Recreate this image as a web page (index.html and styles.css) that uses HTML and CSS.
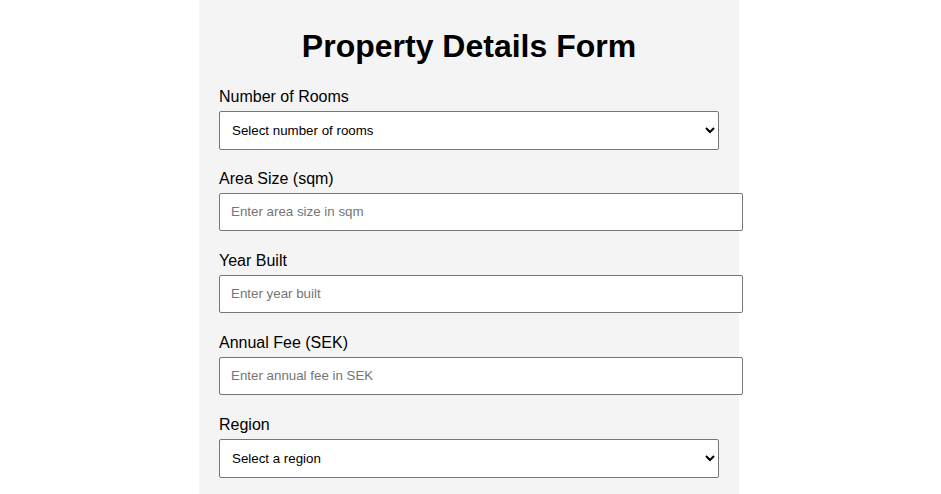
FILE: index.html
```html
<!DOCTYPE html>
<html>
<head>
<title>Property Details Form</title>
<link rel="stylesheet" href="styles.css">
</head>
<body>
<div class="container">
  <h1>Property Details Form</h1>
  <form class="property-form">
    <div class="form-group">
      <label for="rooms">Number of Rooms</label>
      <select id="rooms" name="rooms">
        <option value="">Select number of rooms</option>
        <option value="1">1</option>
        <option value="2">2</option>
        <option value="3">3</option>
        <option value="4">4</option>
        <option value="5">5+</option>
      </select>
    </div>
    <div class="form-group">
      <label for="area">Area Size (sqm)</label>
      <input type="number" id="area" name="area" placeholder="Enter area size in sqm">
    </div>
    <div class="form-group">
      <label for="year">Year Built</label>
      <input type="number" id="year" name="year" placeholder="Enter year built">
    </div>
    <div class="form-group">
      <label for="fee">Annual Fee (SEK)</label>
      <input type="number" id="fee" name="fee" placeholder="Enter annual fee in SEK">
    </div>
    <div class="form-group">
      <label for="region">Region</label>
      <select id="region" name="region">
        <option value="">Select a region</option>
        <option value="stockholm">Stockholm</option>
        <option value="gothenburg">Gothenburg</option>
        <option value="malmo">Malmö</option>
      </select>
    </div>
  </form>
</div>
</body>
</html>
```

FILE: styles.css
```css
/* Styles for the property form */
body {
  font-family: "Liberation Sans", Arial, sans-serif;
  margin: 0;
  padding-right: 3px;
  background-color: #fff;
}

.container {
  width: 500px;
  margin: 0 auto;
  padding: 20px;
  background-color: #f4f4f4;
  min-height: 500px;
}

h1 {
  text-align: center;
  font-size: 32px;
  margin: 8px 0 23px;
}

.form-group {
  margin-bottom: 21px;
}

.form-group:first-child {
  margin-bottom: 20px;
}

label {
  display: block;
  font-size: 16px;
  margin-bottom: 5px;
}

input,
select {
  font-family: "Liberation Sans", Arial, sans-serif;
  font-size: 13.33px;
  line-height: 16px;
  border: 1px solid #767676;
  border-radius: 2px;
  background-color: #fff;
  color: #000;
}

input {
  width: 100%;
  padding: 10px 11px;
}

input::placeholder {
  color: #757575;
}

select {
  width: 100%;
  height: 39px;
  padding: 0 8px;
}
```
